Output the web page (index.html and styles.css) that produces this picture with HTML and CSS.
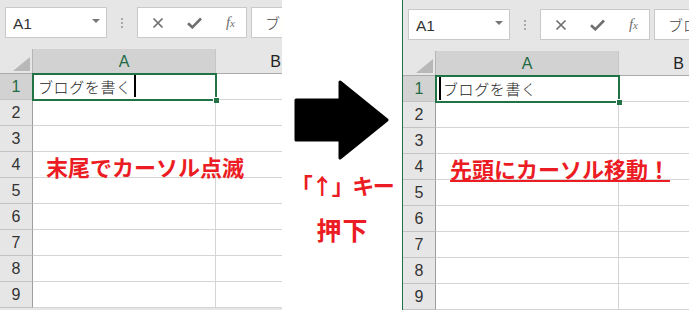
FILE: index.html
```html
<!DOCTYPE html>
<html>
<head>
  <meta charset="UTF-8">
  <title>Excel カーソル移動</title>
  <link rel="stylesheet" href="styles.css">
</head>
<body>
  <div class="page">

    <!-- 押下前 -->
    <section class="panel before">
      <div class="toolbar">
        <div class="namebox"><span>A1</span><i class="drop"></i></div>
        <div class="grip"><b></b><b></b><b></b></div>
        <div class="fxbtns">
          <svg width="12" height="12" viewBox="0 0 12 12"><path d="M1.5 1.5L10.5 10.5M10.5 1.5L1.5 10.5" stroke="#6f6f6f" stroke-width="1.7" fill="none"/></svg>
          <svg width="15" height="12" viewBox="0 0 15 12"><path d="M1 6.2L5.3 10.3L14 1.5" stroke="#6f6f6f" stroke-width="2.6" fill="none"/></svg>
          <span class="fx">f<small>x</small></span>
        </div>
        <div class="formula">ブログを書く</div>
      </div>
      <div class="sheet">
        <div class="corner"><svg width="33" height="25" viewBox="0 0 33 25"><polygon points="13,22 30,22 30,8" fill="#b8b8b8"/></svg></div>
        <div class="colh sel">A</div>
        <div class="colh">B</div>

        <div class="rowh sel">1</div>
        <div class="cell a1">
          <div class="selbox"></div>
          <span class="txt">ブログを書く</span><i class="caret"></i>
        </div>
        <div class="cell"></div>

        <div class="rowh">2</div><div class="cell"></div><div class="cell"></div>
        <div class="rowh">3</div><div class="cell"></div><div class="cell"></div>
        <div class="rowh">4</div><div class="cell"></div><div class="cell"></div>
        <div class="rowh">5</div><div class="cell"></div><div class="cell"></div>
        <div class="rowh">6</div><div class="cell"></div><div class="cell"></div>
        <div class="rowh">7</div><div class="cell"></div><div class="cell"></div>
        <div class="rowh">8</div><div class="cell"></div><div class="cell"></div>
        <div class="rowh">9</div><div class="cell"></div><div class="cell"></div>
      </div>
      <p class="note">末尾でカーソル点滅</p>
    </section>

    <!-- 矢印 -->
    <div class="middle">
      <svg width="96" height="80" viewBox="0 0 96 80">
        <path d="M2 20H46V2L93 40L46 78V60H2Z" fill="#000" stroke="#000" stroke-width="3" stroke-linejoin="round"/>
      </svg>
      <p class="key">「↑」キー</p>
      <p class="key second">押下</p>
    </div>

    <!-- 押下後 -->
    <section class="panel after">
      <div class="toolbar">
        <div class="namebox"><span>A1</span><i class="drop"></i></div>
        <div class="grip"><b></b><b></b><b></b></div>
        <div class="fxbtns">
          <svg width="12" height="12" viewBox="0 0 12 12"><path d="M1.5 1.5L10.5 10.5M10.5 1.5L1.5 10.5" stroke="#6f6f6f" stroke-width="1.7" fill="none"/></svg>
          <svg width="15" height="12" viewBox="0 0 15 12"><path d="M1 6.2L5.3 10.3L14 1.5" stroke="#6f6f6f" stroke-width="2.6" fill="none"/></svg>
          <span class="fx">f<small>x</small></span>
        </div>
        <div class="formula">ブログを書く</div>
      </div>
      <div class="sheet">
        <div class="corner"><svg width="33" height="25" viewBox="0 0 33 25"><polygon points="13,22 30,22 30,8" fill="#b8b8b8"/></svg></div>
        <div class="colh sel">A</div>
        <div class="colh">B</div>

        <div class="rowh sel">1</div>
        <div class="cell a1">
          <div class="selbox"></div>
          <i class="caret"></i><span class="txt">ブログを書く</span>
        </div>
        <div class="cell"></div>

        <div class="rowh">2</div><div class="cell"></div><div class="cell"></div>
        <div class="rowh">3</div><div class="cell"></div><div class="cell"></div>
        <div class="rowh">4</div><div class="cell"></div><div class="cell"></div>
        <div class="rowh">5</div><div class="cell"></div><div class="cell"></div>
        <div class="rowh">6</div><div class="cell"></div><div class="cell"></div>
        <div class="rowh">7</div><div class="cell"></div><div class="cell"></div>
        <div class="rowh">8</div><div class="cell"></div><div class="cell"></div>
        <div class="rowh">9</div><div class="cell"></div><div class="cell"></div>
      </div>
      <p class="note under">先頭にカーソル移動！</p>
    </section>

  </div>
</body>
</html>
```

FILE: styles.css
```css
body {
  margin: 0;
  background: #fff;
  font-family: "Liberation Sans", "Noto Sans CJK JP", sans-serif;
}
.page {
  display: flex;
  width: 689px;
  height: 310px;
  overflow: hidden;
  background: #fff;
}
.panel {
  position: relative;
  overflow: hidden;
  background: #e6e6e6;
}
.before {
  width: 282px;
}
.after {
  flex: 1;
  border-left: 1px solid #217346;
  padding-top: 2px;
}

/* 数式バー */
.toolbar {
  display: flex;
  height: 49px;
  box-sizing: border-box;
  padding: 7px 0 0 5px;
  overflow: hidden;
}
.namebox {
  width: 102px;
  height: 31px;
  box-sizing: border-box;
  border: 1px solid #c9c9c9;
  background: #fff;
  display: flex;
  align-items: center;
  justify-content: space-between;
  padding: 3px 6px 0 7px;
  font-size: 15.5px;
  color: #333;
  flex-shrink: 0;
}
.drop {
  width: 0;
  height: 0;
  margin-top: -6px;
  border-left: 4px solid transparent;
  border-right: 4px solid transparent;
  border-top: 4px solid #767676;
}
.grip {
  width: 30px;
  display: flex;
  flex-direction: column;
  align-items: center;
  gap: 2px;
  padding-top: 11px;
  flex-shrink: 0;
}
.grip b {
  width: 2px;
  height: 2px;
  background: #a9a9a9;
}
.fxbtns {
  width: 110px;
  height: 31px;
  box-sizing: border-box;
  border: 1px solid #c9c9c9;
  background: #fff;
  display: flex;
  align-items: center;
  justify-content: space-between;
  padding: 0 11px 0 14px;
  flex-shrink: 0;
}
.fx {
  font-family: "Liberation Serif", serif;
  font-style: italic;
  font-size: 15px;
  color: #6f6f6f;
}
.fx small {
  font-size: 11px;
}
.formula {
  flex: 1;
  min-width: 0;
  height: 31px;
  margin-left: 4px;
  box-sizing: border-box;
  border: 1px solid #c9c9c9;
  border-right: none;
  background: #fff;
  padding: 4px 0 0 13px;
  font-family: "Noto Sans CJK JP", sans-serif;
  font-weight: 300;
  font-size: 15px;
  color: #444;
  white-space: nowrap;
  overflow: hidden;
}

/* シート */
.sheet {
  display: grid;
  grid-template-columns: 33px 183px 120px;
  grid-template-rows: 25px repeat(9, 26px);
}
.sheet > div {
  box-sizing: border-box;
}
.corner {
  border-right: 1px solid #b5b5b5;
  border-bottom: 1px solid #ababab;
}
.corner svg {
  display: block;
}
.colh {
  border-right: 1px solid #c6c6c6;
  border-bottom: 1px solid #ababab;
  text-align: center;
  font-size: 16px;
  line-height: 25px;
  color: #222;
}
.rowh {
  border-right: 1px solid #9e9e9e;
  border-bottom: 1px solid #c3c3c3;
  text-align: center;
  font-size: 16px;
  line-height: 25px;
  color: #333;
}
.sel {
  background: #d2d2d2;
  color: #1e6b41;
}
.cell {
  background: #fff;
  border-right: 1px solid #d4d4d4;
  border-bottom: 1px solid #d4d4d4;
}
.a1 {
  position: relative;
  display: flex;
  align-items: center;
  padding-left: 5px;
}
.txt {
  font-family: "Noto Sans CJK JP", sans-serif;
  font-weight: 300;
  font-size: 15px;
  letter-spacing: 0.6px;
  color: #222;
  white-space: nowrap;
}
.caret {
  align-self: flex-start;
  width: 2px;
  height: 23px;
  background: #000;
  margin-left: 2px;
}
.after .caret {
  margin: 1px 2px 0 -2px;
}
.selbox {
  position: absolute;
  left: -1px;
  top: -1px;
  width: 185px;
  height: 28px;
  box-sizing: border-box;
  border: 2px solid #217346;
}
.selbox::after {
  content: "";
  position: absolute;
  right: -4px;
  bottom: -4px;
  width: 5px;
  height: 5px;
  background: #217346;
  border: 1px solid #fff;
  border-width: 1px 0 0 1px;
}

/* 注釈 */
.note {
  position: absolute;
  left: 46px;
  top: 155px;
  margin: 0;
  font-family: "Noto Sans CJK JP", sans-serif;
  font-weight: 700;
  font-size: 22px;
  line-height: 22px;
  color: #ec1c24;
  white-space: nowrap;
}
.under {
  left: 47px;
  top: 157px;
  padding-bottom: 1px;
  border-bottom: 2px solid #ec1c24;
}

/* 矢印 */
.middle {
  width: 120px;
  flex-shrink: 0;
  display: flex;
  flex-direction: column;
  align-items: center;
  padding-top: 80px;
  box-sizing: border-box;
}
.middle svg {
  display: block;
}
.key {
  margin: 12px 0 0;
  font-family: "Noto Sans CJK JP", sans-serif;
  font-weight: 700;
  font-size: 22px;
  line-height: 24px;
  letter-spacing: -1.5px;
  color: #ec1c24;
  white-space: nowrap;
}
.key.second {
  margin-top: 21px;
  font-size: 25px;
  line-height: 25px;
  letter-spacing: 1px;
  padding-left: 1px;
}
```
